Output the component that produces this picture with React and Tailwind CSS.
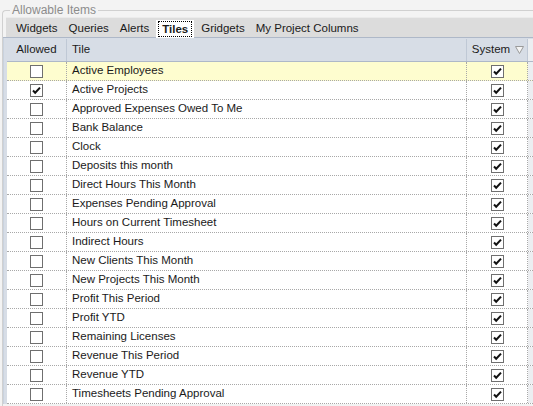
import React from 'react';

const tiles = [
    'Active Employees',
    'Active Projects',
    'Approved Expenses Owed To Me',
    'Bank Balance',
    'Clock',
    'Deposits this month',
    'Direct Hours This Month',
    'Expenses Pending Approval',
    'Hours on Current Timesheet',
    'Indirect Hours',
    'New Clients This Month',
    'New Projects This Month',
    'Profit This Period',
    'Profit YTD',
    'Remaining Licenses',
    'Revenue This Period',
    'Revenue YTD',
    'Timesheets Pending Approval',
];

const tabs = ['Widgets', 'Queries', 'Alerts', 'Tiles', 'Gridgets', 'My Project Columns'];

const CheckBox = ({ checked }) => (
    <div className="w-[13px] h-[13px] border border-[#6f6f6f] bg-white flex items-center justify-center">
        {checked && (
            <svg width="11" height="11" viewBox="0 0 11 11">
                <path d="M2 5.5 L4.2 7.8 L9 2.6" fill="none" stroke="#111" strokeWidth="2" />
            </svg>
        )}
    </div>
);

const App = () => {
    return (
        <div className="w-[533px] h-[406px] bg-[#f3f3f3] overflow-hidden text-[11.5px] text-[#1a1a1a]" style={{ fontFamily: '"Liberation Sans", Arial, sans-serif' }}>
            <fieldset className="ml-[2px] mt-[3px] border-t border-l border-[#d0d0d0] rounded-tl-[4px] h-[420px]">
                <legend className="ml-[7px] px-[2px] text-[#8c8c8c] leading-[14px] text-[12px]">Allowable Items</legend>

                {/* tab strip */}
                <div className="flex items-center h-[20px] bg-[#dcdcdc] border-t border-[#ebebeb] ml-[3px] pl-[6px] gap-[3px]">
                    {tabs.map((t) => (
                        t === 'Tiles' ? (
                            <div key={t} className="bg-white h-[18px] px-[2px] flex items-center mt-[2px]">
                                <span className="border border-dotted border-black px-[3px] leading-[14px] font-bold">{t}</span>
                            </div>
                        ) : (
                            <div key={t} className="px-[4px] leading-[18px]">{t}</div>
                        )
                    ))}
                </div>

                <div className="flex border-t border-[#aeb8c8]">
                    <div className="w-[1px] bg-[#c9d2de]" />
                    <div className="w-[3px] bg-[#d7dde6]" />
                    <div className="flex-1">
                        {/* header */}
                        <div className="flex h-[24px] pt-[1px] bg-[#d7dde6] border-b border-[#aeb8c8]">
                            <div className="w-[60px] flex items-center justify-center border-r border-[#bfc8d5]">Allowed</div>
                            <div className="w-[400px] flex items-center pl-[5px] border-r border-[#bfc8d5]">Tile</div>
                            <div className="w-[61px] flex items-center justify-center gap-[5px] border-r border-[#bfc8d5] pl-[2px]">
                                System
                                <svg width="9" height="8" viewBox="0 0 9 8">
                                    <path d="M0.5 0.5 H8.5 L4.5 7.5 Z" fill="#f4f4f4" stroke="#9a9a9a" />
                                </svg>
                            </div>
                            <div className="flex-1 bg-[#eceef1]" />
                        </div>

                        {/* rows */}
                        {tiles.map((t, i) => (
                            <div key={t} className={`flex h-[19px] border-b border-dotted border-[#a8a8a8] ${i === 0 ? 'bg-[#fefdcf]' : 'bg-white'}`}>
                                <div className="w-[60px] flex items-center justify-center border-r border-dotted border-[#a8a8a8]">
                                    <CheckBox checked={i === 1} />
                                </div>
                                <div className="w-[400px] flex items-center pl-[5px] border-r border-dotted border-[#a8a8a8]">{t}</div>
                                <div className="w-[61px] flex items-center justify-center border-r border-dotted border-[#a8a8a8]">
                                    <CheckBox checked />
                                </div>
                                <div className="flex-1 bg-[#eceef1]" />
                            </div>
                        ))}
                    </div>
                </div>
            </fieldset>
        </div>
    );
};

export default App;
